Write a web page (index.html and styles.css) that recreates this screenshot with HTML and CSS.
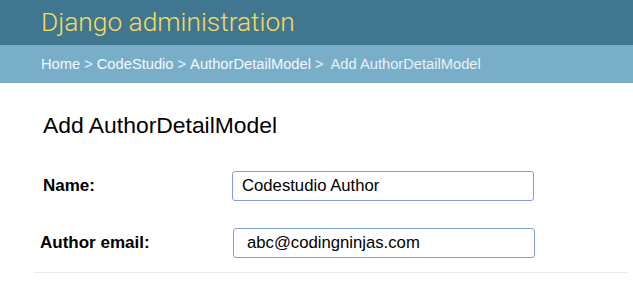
FILE: index.html
```html
<!DOCTYPE html>
<html>
<head>
<meta charset="utf-8">
<link rel="stylesheet" href="styles.css">
</head>
<body>
<header class="header">
  <div class="branding">Django administration</div>
</header>
<nav class="breadcrumbs">
  <a href="#">Home</a><span class="sep">&gt;</span><a href="#">CodeStudio</a><span class="sep">&gt;</span><a href="#">AuthorDetailModel</a><span class="sep last-sep">&gt;</span><span class="current">Add AuthorDetailModel</span>
</nav>
<main class="content">
  <h1 class="title">Add AuthorDetailModel</h1>
  <form class="form">
    <div class="row row-name">
      <label class="label">Name:</label>
      <div class="field"><input class="input" type="text" value="Codestudio Author"></div>
    </div>
    <div class="row row-email">
      <label class="label label-email">Author email:</label>
      <div class="field"><input class="input input-email" type="text" value="abc@codingninjas.com"></div>
    </div>
  </form>
</main>
</body>
</html>
```
FILE: styles.css
```css
html, body {
  margin: 0;
  padding: 0;
  background: #fff;
  font-family: "Liberation Sans", Arial, sans-serif;
  overflow: hidden;
}
.header {
  height: 45px;
  background: #417690;
  display: flex;
  align-items: center;
  padding-left: 41px;
  box-sizing: border-box;
}
.branding {
  font-family: Roboto, "Liberation Sans", sans-serif;
  font-weight: 300;
  font-size: 26.3px;
  color: #f5dd5d;
  margin-top: -2px;
}
.breadcrumbs {
  height: 38px;
  background: #79aec8;
  display: flex;
  align-items: center;
  padding-left: 41px;
  box-sizing: border-box;
  font-size: 14.7px;
  color: #eef6fa;
}
.breadcrumbs a {
  color: #f4f9fc;
  text-decoration: none;
}
.sep {
  margin: 0 4px;
}
.last-sep {
  margin-right: 7px;
}
.current {
  color: #e8f2f7;
}
.content {
  padding: 0 5px 0 34px;
}
.title {
  margin: 0;
  padding: 27px 0 0 9px;
  font-size: 22.9px;
  font-weight: 400;
  color: #000;
  line-height: 30px;
}
.form {
  margin-top: 31px;
  border-bottom: 1px solid #eaeaea;
  padding-bottom: 14px;
}
.row {
  display: flex;
  align-items: center;
}
.row-email {
  margin-top: 27px;
}
.label {
  width: 198px;
  padding-left: 9px;
  box-sizing: border-box;
  font-weight: 700;
  font-size: 17px;
  color: #000;
}
.label-email {
  padding-left: 6px;
}
.input {
  width: 302px;
  height: 30px;
  box-sizing: border-box;
  border: 1.5px solid #7fa1d4;
  border-radius: 3px;
  padding: 0 0 0 9px;
  font-family: "Liberation Sans", Arial, sans-serif;
  font-size: 16.7px;
  color: #000;
  outline: none;
}
.input-email {
  margin-left: 1px;
  padding-left: 13px;
}
```
